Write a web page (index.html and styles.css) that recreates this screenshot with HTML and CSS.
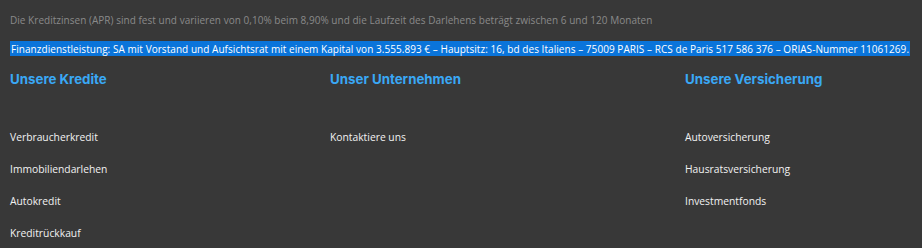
FILE: index.html
```html
<!DOCTYPE html>
<html lang="de">
<head>
    <meta charset="UTF-8">
    <meta name="viewport" content="width=device-width, initial-scale=1.0">
    <title>Footer</title>
    <link rel="stylesheet" href="styles.css">
</head>
<body>
    <footer class="site-footer">
        <p class="legal-note">Die Kreditzinsen (APR) sind fest und variieren von 0,10% beim 8,90% und die Laufzeit des Darlehens beträgt zwischen 6 und 120 Monaten</p>
        <p class="legal-company"><span class="marked">Finanzdienstleistung: SA mit Vorstand und Aufsichtsrat mit einem Kapital von 3.555.893 € – Hauptsitz: 16, bd des Italiens – 75009 PARIS – RCS de Paris 517 586 376 – ORIAS-Nummer 11061269.</span></p>

        <div class="footer-columns">
            <div class="footer-col">
                <h3>Unsere Kredite</h3>
                <ul>
                    <li><a href="#">Verbraucherkredit</a></li>
                    <li><a href="#">Immobiliendarlehen</a></li>
                    <li><a href="#">Autokredit</a></li>
                    <li><a href="#">Kreditrückkauf</a></li>
                </ul>
            </div>
            <div class="footer-col">
                <h3>Unser Unternehmen</h3>
                <ul>
                    <li><a href="#">Kontaktiere uns</a></li>
                </ul>
            </div>
            <div class="footer-col">
                <h3>Unsere Versicherung</h3>
                <ul>
                    <li><a href="#">Autoversicherung</a></li>
                    <li><a href="#">Hausratsversicherung</a></li>
                    <li><a href="#">Investmentfonds</a></li>
                </ul>
            </div>
        </div>
    </footer>
</body>
</html>
```

FILE: styles.css
```css
body {
    margin: 0;
    padding: 0;
    background-color: #383838; /* dark footer grey */
    font-family: 'Open Sans', 'Liberation Sans', sans-serif;
}
.site-footer {
    padding: 0 10px;
    height: 248px;
    overflow: hidden;
}
.legal-note {
    margin: 0;
    padding-top: 13px;
    font-size: 10px;
    line-height: 14px;
    color: #8a8a8a;
    white-space: nowrap;
    letter-spacing: 0.03px;
}
.legal-company {
    margin: 15px 0 0;
    font-size: 10px;
    line-height: 14px;
    font-weight: 500;
    color: #ffffff;
    white-space: nowrap;
    letter-spacing: 0.05px;
}
.marked {
    background-color: #0a74da; /* text selection blue */
    padding: 1px 1px 0;
}
.footer-columns {
    display: grid;
    grid-template-columns: 320px 355px 1fr;
    margin-top: 14px;
}
.footer-col h3 {
    margin: 0;
    font-family: 'Inter', sans-serif;
    font-size: 13.3px;
    font-weight: 700;
    line-height: 18px;
    color: #3aa8f5;
}
.footer-col ul {
    list-style: none;
    margin: 38px 0 0;
    padding: 0;
}
.footer-col li {
    height: 32px;
    line-height: 18px;
}
.footer-col a {
    font-size: 10.3px;
    font-weight: 500;
    color: #f2f2f2;
    text-decoration: none;
}
```
